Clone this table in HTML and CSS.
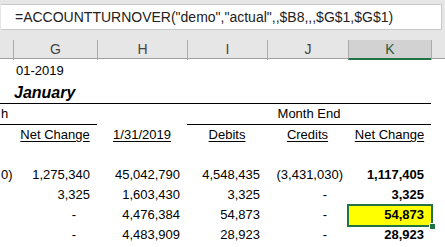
FILE: index.html
```html
<!DOCTYPE html>
<html>
<head>
<meta charset="utf-8">
<link rel="stylesheet" href="styles.css">
</head>
<body>
<div class="topbar">
  <div class="fx">=ACCOUNTTURNOVER("demo","actual",,$B8,,,$G$1,$G$1)</div>
</div>
<div class="colhead">
  <div class="h"></div>
  <div class="h">G</div>
  <div class="h">H</div>
  <div class="h">I</div>
  <div class="h">J</div>
  <div class="h sel-col">K</div>
  <div class="h"></div>
</div>
<div class="sheet">
  <div class="row r1">
    <div class="c"></div>
    <div class="c left date">01-2019</div>
  </div>
  <div class="row r2">
    <div class="c line"></div>
    <div class="c left month line">January</div>
    <div class="c line"></div>
    <div class="c line"></div>
    <div class="c line"></div>
    <div class="c line"></div>
  </div>
  <div class="row r3">
    <div class="c left tail line">h</div>
    <div class="c line"></div>
    <div class="c"></div>
    <div class="c center line span3">Month End</div>
  </div>
  <div class="row r4">
    <div class="c"></div>
    <div class="c center"><u>Net Change</u></div>
    <div class="c center"><u>1/31/2019</u></div>
    <div class="c center"><u>Debits</u></div>
    <div class="c center"><u>Credits</u></div>
    <div class="c center"><u>Net Change</u></div>
  </div>
  <div class="row r5"></div>
  <div class="row">
    <div class="c left tail">0)</div>
    <div class="c">1,275,340</div>
    <div class="c">45,042,790</div>
    <div class="c">4,548,435</div>
    <div class="c neg">(3,431,030)</div>
    <div class="c b">1,117,405</div>
  </div>
  <div class="row">
    <div class="c"></div>
    <div class="c">3,325</div>
    <div class="c">1,603,430</div>
    <div class="c">3,325</div>
    <div class="c dash">-</div>
    <div class="c b">3,325</div>
  </div>
  <div class="row">
    <div class="c"></div>
    <div class="c dash">-</div>
    <div class="c">4,476,384</div>
    <div class="c">54,873</div>
    <div class="c dash">-</div>
    <div class="c b selected">54,873<span class="selbox"></span><span class="handle"></span></div>
  </div>
  <div class="row">
    <div class="c"></div>
    <div class="c dash">-</div>
    <div class="c">4,483,909</div>
    <div class="c">28,923</div>
    <div class="c dash">-</div>
    <div class="c b">28,923</div>
  </div>
</div>
</body>
</html>
```

FILE: styles.css
```css
* { box-sizing: border-box; }
html, body { margin: 0; padding: 0; }
body {
  width: 445px;
  height: 247px;
  overflow: hidden;
  background: #fff;
  font-family: "Liberation Sans", Arial, sans-serif;
  color: #000;
}
.topbar {
  height: 40px;
  background: #e6e6e6;
  padding: 4px 3px 0 1px;
}
.fx {
  height: 26px;
  background: #fff;
  border: 1px solid #c8c8c8;
  border-left: none;
  font-size: 14px;
  line-height: 24px;
  padding-left: 14px;
  color: #222;
  white-space: nowrap;
}
.colhead {
  display: grid;
  grid-template-columns: 13px 84px 90px 80px 81px 83px 1fr;
  height: 19px;
  background: #e6e6e6;
  border-bottom: 1px solid #a0a0a0;
}
.h {
  border-left: 1px solid #ababab;
  text-align: center;
  font-size: 14px;
  line-height: 18px;
  color: #444;
}
.h:first-child { border-left: none; }
.sel-col {
  background: #d2d2d2;
  border-bottom: 2px solid #217346;
  color: #2a5c3f;
  line-height: 18px;
}
.sheet { display: flex; flex-direction: column; }
.row {
  display: grid;
  grid-template-columns: 13px 84px 90px 80px 81px 83px 1fr;
  height: 20px;
  align-items: stretch;
  font-size: 13px;
}
.c {
  text-align: right;
  padding: 0 7px 0 0;
  white-space: nowrap;
  line-height: 21px;
}
.r1 { height: 23px; }
.r1 .c { line-height: 24px; }
.r2 { height: 22px; }
.r2 .c { line-height: 21px; }
.left { text-align: left; padding: 0; overflow: visible; }
.center { text-align: center; padding: 0; }
.date { padding-left: 3px; }
.month {
  font-weight: bold;
  font-style: italic;
  font-size: 16px;
  padding-left: 1px;
}
.tail { padding-left: 1px; }
.line { border-bottom: 1px solid #000; }
.span3 { grid-column: 4 / span 3; }
.r3 .c { line-height: 20px; }
.r4 u { text-underline-offset: 2px; }
.neg { padding-right: 5px; }
.dash { padding-right: 21px; }
.b { font-weight: bold; }
.selected {
  position: relative;
  background: #ffff00;
}
.selbox {
  position: absolute;
  left: -1px;
  top: 0;
  right: -2px;
  bottom: -2px;
  border: 2px solid #217346;
}
.handle {
  position: absolute;
  right: -5px;
  bottom: -5px;
  width: 7px;
  height: 7px;
  background: #217346;
  border: 1px solid #fff;
}
```
